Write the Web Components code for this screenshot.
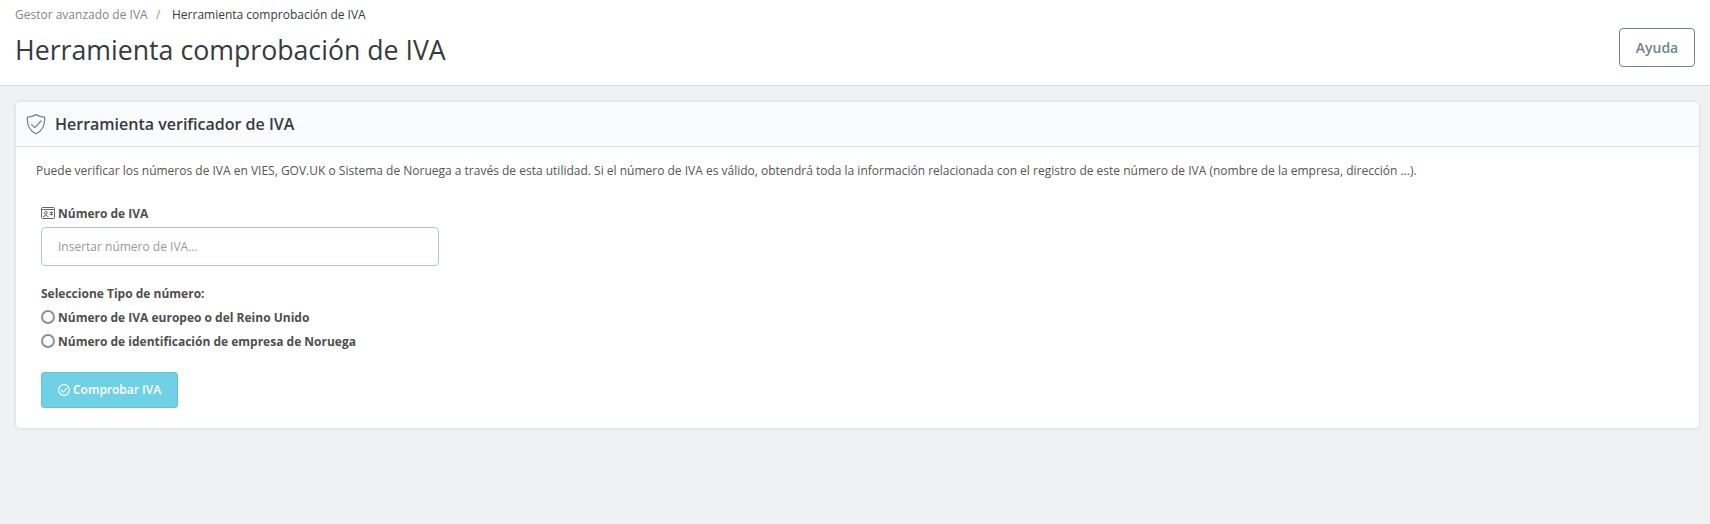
<!DOCTYPE html>
<html lang="es">
<head>
<meta charset="utf-8">
<title>Herramienta comprobación de IVA</title>
<style>
html,body{margin:0;height:100%}
body{background:#eff1f2;font-family:"Open Sans","Noto Sans",sans-serif;color:#363a41;overflow:hidden}
</style>
</head>
<body>
<page-header heading="Herramienta comprobación de IVA">
  <span slot="parent">Gestor avanzado de IVA</span>
  <span slot="current">Herramienta comprobación de IVA</span>
  <help-button slot="actions">Ayuda</help-button>
</page-header>
<vat-panel>
  <span slot="title">Herramienta verificador de IVA</span>
  <span slot="intro">Puede verificar los números de IVA en VIES, GOV.UK o Sistema de Noruega a través de esta utilidad. Si el número de IVA es válido, obtendrá toda la información relacionada con el registro de este número de IVA (nombre de la empresa, dirección ...).</span>
  <vat-field placeholder="Insertar número de IVA...">Número de IVA</vat-field>
  <radio-group>
    <span slot="legend">Seleccione Tipo de número:</span>
    <radio-option>Número de IVA europeo o del Reino Unido</radio-option>
    <radio-option>Número de identificación de empresa de Noruega</radio-option>
  </radio-group>
  <submit-button>Comprobar IVA</submit-button>
</vat-panel>
<script>
const define = (name, html, setup) => customElements.define(name, class extends HTMLElement {
  constructor() {
    super();
    const root = this.attachShadow({mode: 'open'});
    root.innerHTML = html;
    if (setup) setup(this, root);
  }
});

define('page-header', `
<style>
:host{display:flex;justify-content:space-between;box-sizing:border-box;height:86px;padding:0 15px;background:#fff;border-bottom:1px solid #d3dbdf}
nav{display:flex;height:16px;padding-top:7px;font-size:12px;line-height:16px;white-space:nowrap}
.parent{color:#858585;width:132px}
.sep{color:#70b336;margin-left:9px;width:16px}
h1{margin:9px 0 0;font-size:26.7px;line-height:36px;font-weight:400;white-space:nowrap}
.actions{padding-top:28px}
</style>
<div><nav><span class="parent"><slot name="parent"></slot></span><span class="sep">/</span><slot name="current"></slot></nav><h1></h1></div>
<div class="actions"><slot name="actions"></slot></div>`,
(el, root) => { root.querySelector('h1').textContent = el.getAttribute('heading'); });

define('help-button', `
<style>
:host{display:block}
button{display:block;box-sizing:border-box;width:76px;height:39px;padding:0;border:1px solid #6c868e;border-radius:4px;background:#fff;color:#6c868e;font:600 14px/21px "Open Sans","Noto Sans",sans-serif}
</style><button><slot></slot></button>`);

define('vat-panel', `
<style>
:host{display:block;box-sizing:border-box;height:328px;margin:15px 10px 0 15px;border:1px solid #dbe6e9;border-radius:5px;background:#fff;box-shadow:0 0 4px rgba(0,0,0,.06);overflow:hidden}
header{display:flex;align-items:center;box-sizing:border-box;height:45px;padding-left:10px;border-bottom:1px solid #d5e5e7;background:#fafbfc;font-size:16px;font-weight:600;white-space:nowrap}
svg{width:20px;height:22px;margin-right:9px;fill:none;stroke:#6c868e;stroke-width:1.25;stroke-linecap:round;stroke-linejoin:round}
p{margin:15px 0 0 20px;font-size:12px;line-height:18px;color:#555;white-space:nowrap}
.body{padding:24px 25px 0}
</style>
<header><svg viewBox="0 0 20 22"><path d="M10 1.6C7.8 3 4.6 4 1.4 4.2C.9 10.8 2.6 17.4 10 20.8C17.4 17.4 19.1 10.8 18.6 4.2C15.4 4 12.2 3 10 1.6Z"/><path d="M5.5 11.6L8.8 14.6L15 8"/></svg><slot name="title"></slot></header>
<p><slot name="intro"></slot></p>
<div class="body"><slot></slot></div>`);

define('vat-field', `
<style>
:host{display:block;width:398px}
label{display:flex;align-items:center;height:18px;font-size:12px;font-weight:700;color:#4e4e4e}
svg{width:14px;height:12px;margin-right:3px;fill:none;stroke:#666;stroke-width:1}
input{display:block;box-sizing:border-box;width:398px;height:39px;margin-top:5px;padding:0 16px;border:1px solid #b3c7cd;border-radius:4px;background:#fff;font:12px "Open Sans","Noto Sans",sans-serif;color:#555}
input::placeholder{color:#999;opacity:1}
</style>
<label><svg viewBox="0 0 14 12"><rect x=".5" y=".5" width="13" height="11" rx="1"/><path d="M.5 2.5H13.5M8.5 5.5H12M8.5 7.5H12M10.5 4.5V8.5"/><circle cx="4.8" cy="5.8" r="1.4"/><path d="M2 9.5H3.3L4 8.1H5.6L6.4 9.5H7.5"/></svg><slot></slot></label><input>`,
(el, root) => { root.querySelector('input').placeholder = el.getAttribute('placeholder'); });

define('radio-group', `
<style>
:host{display:block;margin-top:18px;font-size:12px;line-height:20px;font-weight:700;color:#4e4e4e}
div{height:22px}
</style><div><slot name="legend"></slot></div><slot></slot>`);

define('radio-option', `
<style>
:host{display:block;height:24px}
label{display:flex;align-items:center;height:24px;line-height:24px;white-space:nowrap}
input{appearance:none;box-sizing:border-box;width:14px;height:14px;margin:0 3px 2px 0;border:2px solid #8f8f9d;border-radius:50%;background:#fff}
</style><label><input type="radio"><slot></slot></label>`);

define('submit-button', `
<style>
:host{display:block;margin-top:18px}
button{display:flex;align-items:center;box-sizing:border-box;width:137px;height:36px;padding:0 16px;border:1px solid #65c2d4;border-radius:3px;background:#70d0e4;color:#fff;font:600 12px/18px "Open Sans","Noto Sans",sans-serif;white-space:nowrap}
svg{flex:none;width:12px;height:12px;margin-right:3px;fill:none;stroke:#fff;stroke-width:1.1;stroke-linecap:round;stroke-linejoin:round}
</style>
<button><svg viewBox="0 0 12 12"><circle cx="6" cy="6" r="5.4"/><path d="M3.3 6.2L5.2 8.1L8.9 4.1"/></svg><slot></slot></button>`);
</script>
</body>
</html>
